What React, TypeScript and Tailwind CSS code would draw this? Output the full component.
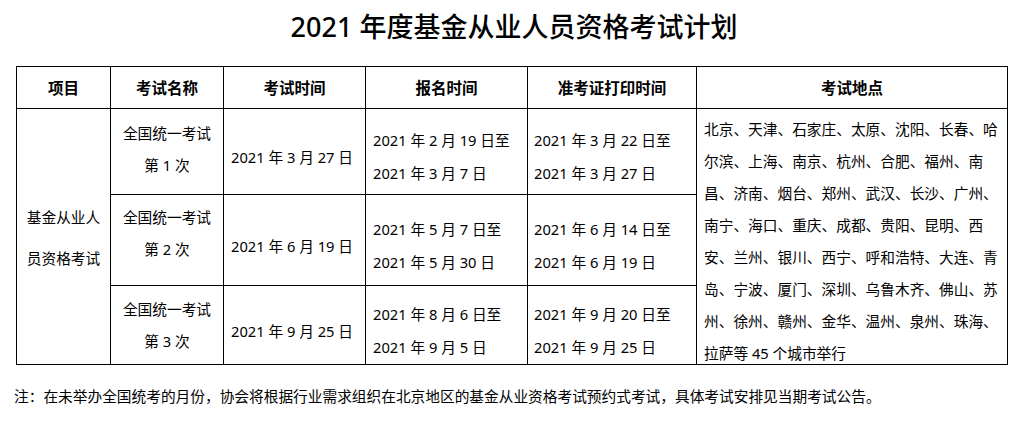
const rows = [
  {
    name: "第 1 次",
    exam: "2021 年 3 月 27 日",
    signup: ["2021 年 2 月 19 日至", "2021 年 3 月 7 日"],
    ticket: ["2021 年 3 月 22 日至", "2021 年 3 月 27 日"],
    h: "h-[86px]",
    nameShift: "pb-[6px]",
  },
  {
    name: "第 2 次",
    exam: "2021 年 6 月 19 日",
    signup: ["2021 年 5 月 7 日至", "2021 年 5 月 30 日"],
    ticket: ["2021 年 6 月 14 日至", "2021 年 6 月 19 日"],
    h: "h-[91px]",
    nameShift: "pb-[14px]",
  },
  {
    name: "第 3 次",
    exam: "2021 年 9 月 25 日",
    signup: ["2021 年 8 月 6 日至", "2021 年 9 月 5 日"],
    ticket: ["2021 年 9 月 20 日至", "2021 年 9 月 25 日"],
    h: "h-[79px]",
    nameShift: "pb-0",
  },
];

const cityLines = [
  "北京、天津、石家庄、太原、沈阳、长春、哈",
  "尔滨、上海、南京、杭州、合肥、福州、南",
  "昌、济南、烟台、郑州、武汉、长沙、广州、",
  "南宁、海口、重庆、成都、贵阳、昆明、西",
  "安、兰州、银川、西宁、呼和浩特、大连、青",
  "岛、宁波、厦门、深圳、乌鲁木齐、佛山、苏",
  "州、徐州、赣州、金华、温州、泉州、珠海、",
  "拉萨等 45 个城市举行",
];

const headers = ["项目", "考试名称", "考试时间", "报名时间", "准考证打印时间", "考试地点"];

export default function App() {
  return (
    <div className="w-[1028px] h-[422px] bg-white text-black font-['Noto_Sans','Noto_Sans_CJK_SC',sans-serif] text-[14.7px]">
      {/* Title */}
      <h1 className="h-[54px] text-center text-[27px] leading-[54px] font-medium">
        2021 年度基金从业人员资格考试计划
      </h1>

      {/* Schedule table */}
      <div className="pt-[12px] pl-[16px]">
        <table className="table-fixed border-collapse border border-black w-[991px]">
          <colgroup>
            <col className="w-[94px]" />
            <col className="w-[113px]" />
            <col className="w-[142px]" />
            <col className="w-[162px]" />
            <col className="w-[169px]" />
            <col className="w-[311px]" />
          </colgroup>
          <thead>
            <tr className="h-[42px]">
              {headers.map((t) => (
                <th
                  key={t}
                  className="border border-black p-0 text-center align-middle text-[15.5px] font-bold leading-[20px]"
                >
                  {t}
                </th>
              ))}
            </tr>
          </thead>
          <tbody>
            {rows.map((r, i) => (
              <tr key={r.name} className={r.h}>
                {i === 0 && (
                  <td rowSpan={3} className="border border-black p-0 text-center align-middle">
                    <div className="leading-[41px] pt-[2px]">
                      <div>基金从业人</div>
                      <div>员资格考试</div>
                    </div>
                  </td>
                )}
                <td className="border border-black p-0 text-center align-middle">
                  <div className={`leading-[32px] ${r.nameShift}`}>
                    <div>全国统一考试</div>
                    <div>{r.name}</div>
                  </div>
                </td>
                <td className="border border-black p-0 text-center align-middle">
                  <div className="pt-[11px] pr-[5px] leading-[32px] whitespace-nowrap">{r.exam}</div>
                </td>
                <td className="border border-black p-0 align-middle">
                  <div className="pt-[11px] pl-[7px] leading-[33px] whitespace-nowrap">
                    <div>{r.signup[0]}</div>
                    <div>{r.signup[1]}</div>
                  </div>
                </td>
                <td className="border border-black p-0 align-middle">
                  <div className="pt-[11px] pl-[6px] leading-[33px] whitespace-nowrap">
                    <div>{r.ticket[0]}</div>
                    <div>{r.ticket[1]}</div>
                  </div>
                </td>
                {i === 0 && (
                  <td rowSpan={3} className="border border-black p-0 align-top">
                    <div className="h-[252px] pt-[4px] pl-[7px] leading-[32px] whitespace-nowrap">
                      {cityLines.map((l) => (
                        <div key={l}>{l}</div>
                      ))}
                    </div>
                  </td>
                )}
              </tr>
            ))}
          </tbody>
        </table>
      </div>

      {/* Footnote */}
      <p className="mt-[20px] pl-[14px] leading-[22px] whitespace-nowrap">
        注：在未举办全国统考的月份，协会将根据行业需求组织在北京地区的基金从业资格考试预约式考试，具体考试安排见当期考试公告。
      </p>
    </div>
  );
}
